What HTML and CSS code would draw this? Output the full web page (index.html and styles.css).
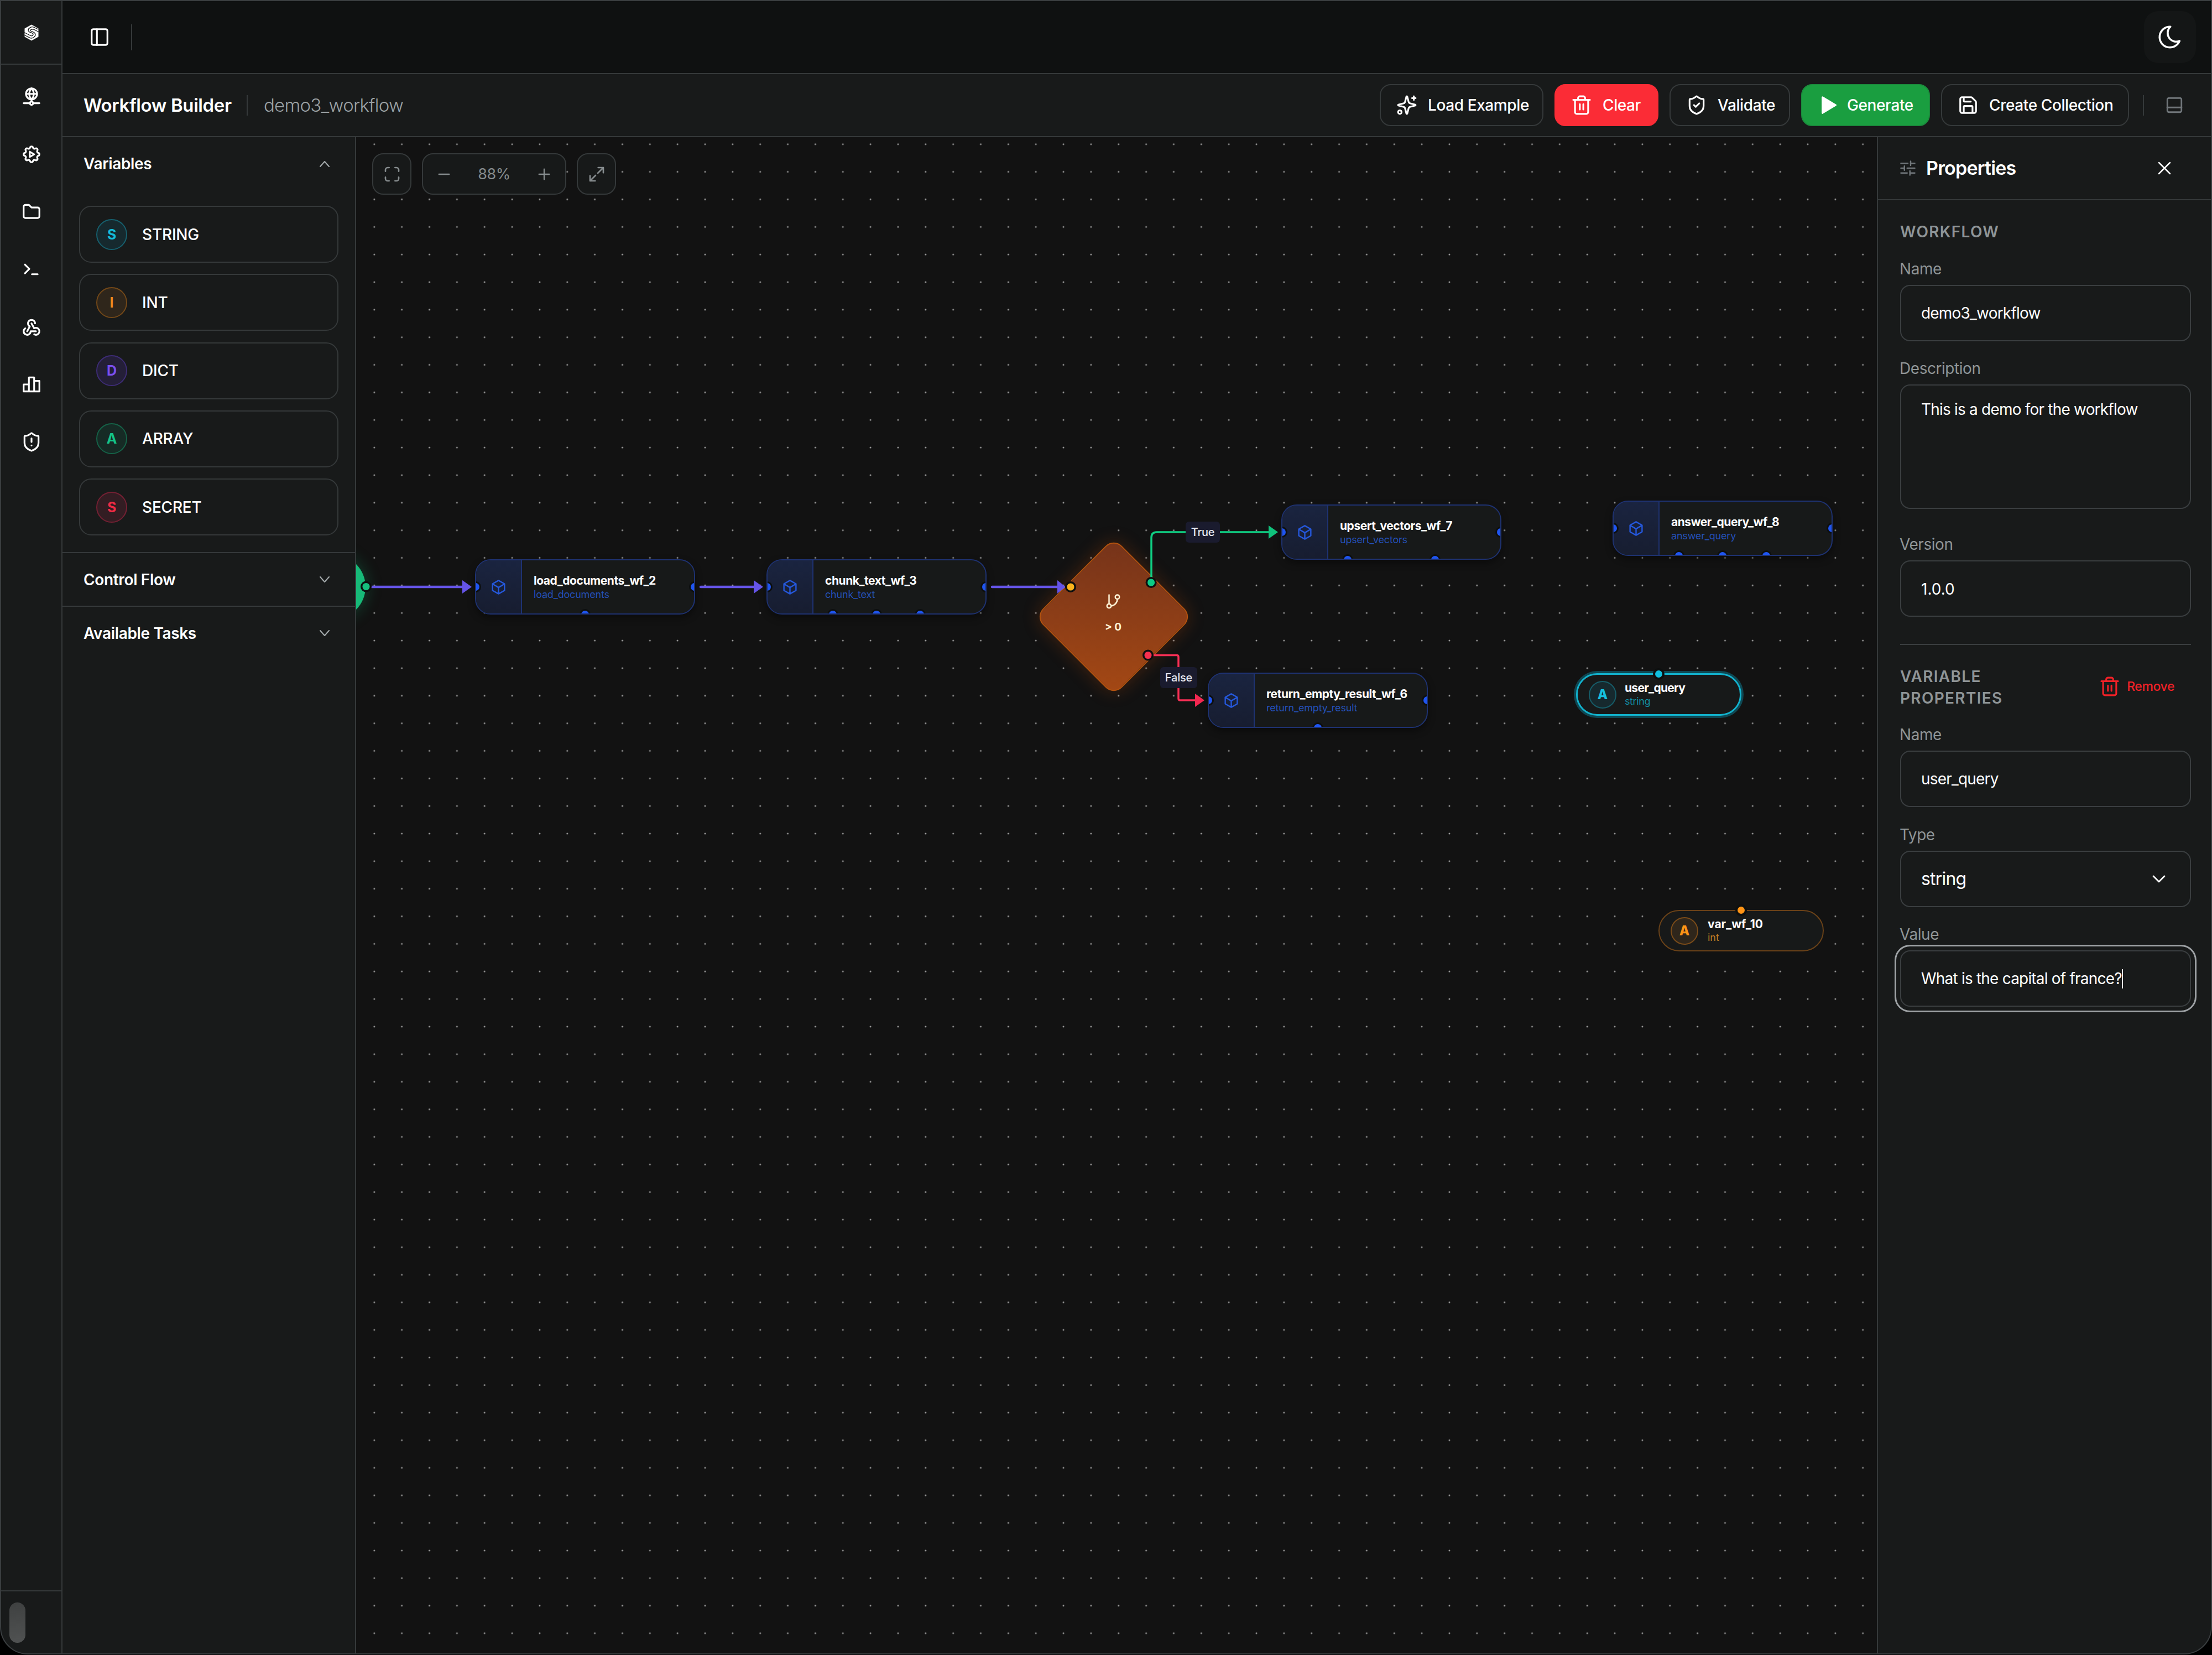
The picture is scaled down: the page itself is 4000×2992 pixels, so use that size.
FILE: index.html
```
<!DOCTYPE html>
<html lang="en">
<head>
  <meta charset="UTF-8">
  <meta name="viewport" content="width=device-width, initial-scale=1.0">
  <title>Workflow Builder</title>
  <link rel="stylesheet" href="styles.css">
</head>
<body>
  <div class="app">
    <!-- Icon rail -->
    <nav class="rail">
      <div class="rail-logo">
        <svg class="logo" viewBox="0 0 26 30">
          <path d="M13 0.5L25.5 7.5V22.5L13 29.5L0.5 22.5V7.5Z" fill="#fff"/>
          <path d="M25 9L17 5.2C13 3.4 7 7 7 10.5C7 16 16 14 16 18C16 20 13.5 21.5 11.5 20.5L0.5 15M25.5 13.5L17 9.2C14.5 8 11 9.5 11 11C11 13.5 20 13 20 18.5C20 22.5 14.5 26.5 10 24.3L0.5 19.5" fill="none" stroke="#181a1a" stroke-width="1.3"/>
        </svg>
      </div>
      <div class="rail-items">
        <svg class="icon" viewBox="0 0 24 24"><circle cx="12" cy="8.7" r="6.3"/><path d="M5.7 8.7h12.6M12 2.4c-3.4 3.6-3.4 9 0 12.6M12 2.4c3.4 3.6 3.4 9 0 12.6M12 15v2.5M3 19.3h7M14 19.3h7"/><circle cx="12" cy="19.3" r="1.9"/></svg>
        <svg class="icon" viewBox="0 0 24 24"><path d="M10.325 4.317c.426 -1.756 2.924 -1.756 3.35 0a1.724 1.724 0 0 0 2.573 1.066c1.543 -.94 3.31 .826 2.37 2.37a1.724 1.724 0 0 0 1.065 2.572c1.756 .426 1.756 2.924 0 3.35a1.724 1.724 0 0 0 -1.066 2.573c.94 1.543 -.826 3.31 -2.37 2.37a1.724 1.724 0 0 0 -2.572 1.065c-.426 1.756 -2.924 1.756 -3.35 0a1.724 1.724 0 0 0 -2.573 -1.066c-1.543 .94 -3.31 -.826 -2.37 -2.37a1.724 1.724 0 0 0 -1.065 -2.572c-1.756 -.426 -1.756 -2.924 0 -3.35a1.724 1.724 0 0 0 1.066 -2.573c-.94 -1.543 .826 -3.31 2.37 -2.37c1 .608 2.296 .07 2.572 -1.065z"/><path d="M10 9v6l5 -3z"/></svg>
        <svg class="icon" viewBox="0 0 24 24"><path d="M5 4h4l3 3h7a2 2 0 0 1 2 2v8a2 2 0 0 1 -2 2h-14a2 2 0 0 1 -2 -2v-11a2 2 0 0 1 2 -2"/></svg>
        <svg class="icon" viewBox="0 0 24 24"><path d="M4.5 6.5l5 5l-5 5M12.5 17.5h6.5"/></svg>
        <svg class="icon" viewBox="0 0 24 24"><path d="M4.876 13.61a4 4 0 1 0 6.124 3.39h6M15.066 20.502a4 4 0 1 0 1.934 -7.502c-.706 0 -1.424 .179 -2 .5l-3 -5.5M16 8a4 4 0 1 0 -8 0c0 1.506 .77 2.818 2 3.5l-3 5.5"/></svg>
        <svg class="icon" viewBox="0 0 24 24"><path d="M3 12h6v8H3zM9 4h6v16H9zM15 8h6v12h-6z"/></svg>
        <svg class="icon" viewBox="0 0 24 24"><use href="#shield"/><path d="M12 8v4M12 16h.01"/></svg>
      </div>
      <div class="rail-user"><span class="avatar"></span></div>
    </nav>

    <div class="main">
      <!-- Top bar -->
      <header class="topbar">
        <svg class="icon" viewBox="0 0 24 24"><rect x="3" y="3" width="18" height="18" rx="2"/><path d="M9 3v18"/></svg>
        <span class="topbar-sep"></span>
        <button class="theme-btn">
          <svg class="moon" viewBox="0 0 24 24"><path d="M12 3c.132 0 .263 0 .393 0a7.5 7.5 0 0 0 7.92 12.446a9 9 0 1 1 -8.313 -12.454z"/></svg>
        </button>
      </header>

      <!-- Workflow toolbar -->
      <div class="toolbar">
        <h1>Workflow Builder</h1>
        <span class="sep"></span>
        <span class="wf-name">demo3_workflow</span>
        <div class="actions">
          <button class="btn load">
            <svg class="icon" viewBox="0 0 24 24"><path d="M9.937 15.5A2 2 0 0 0 8.5 14.063l-6.135-1.582a.5.5 0 0 1 0-.962L8.5 9.936A2 2 0 0 0 9.937 8.5l1.582-6.135a.5.5 0 0 1 .963 0L14.063 8.5A2 2 0 0 0 15.5 9.937l6.135 1.581a.5.5 0 0 1 0 .964L15.5 14.063a2 2 0 0 0-1.437 1.437l-1.582 6.135a.5.5 0 0 1-.963 0zM20 2v4M22 4h-4"/><circle cx="4" cy="20" r="2"/></svg>
            <span>Load Example</span>
          </button>
          <button class="btn clear">
            <svg class="icon" viewBox="0 0 24 24"><use href="#trash"/></svg>
            <span>Clear</span>
          </button>
          <button class="btn validate">
            <svg class="icon" viewBox="0 0 24 24"><use href="#shield"/><path d="M9 12l2 2 4-4"/></svg>
            <span>Validate</span>
          </button>
          <button class="btn generate">
            <svg class="icon" viewBox="0 0 24 24"><path d="M5.5 3l15 9-15 9z" fill="#fff"/></svg>
            <span>Generate</span>
          </button>
          <button class="btn create">
            <svg class="icon" viewBox="0 0 24 24"><path d="M15.2 3a2 2 0 0 1 1.4.6l3.8 3.8a2 2 0 0 1 .6 1.4V19a2 2 0 0 1-2 2H5a2 2 0 0 1-2-2V5a2 2 0 0 1 2-2zM17 21v-7a1 1 0 0 0-1-1H8a1 1 0 0 0-1 1v7M7 3v4a1 1 0 0 0 1 1h7"/></svg>
            <span>Create Collection</span>
          </button>
        </div>
        <span class="sep end"></span>
        <svg class="dock" viewBox="0 0 24 24"><rect x="3" y="3" width="18" height="18" rx="2"/><path d="M3 15h18"/></svg>
      </div>

      <div class="workspace">
        <!-- Palette -->
        <aside class="palette">
          <section class="group open">
            <div class="group-head"><span>Variables</span><svg class="chev" viewBox="0 0 20 12"><path d="M2 11l8-9 8 9"/></svg></div>
            <div class="vars">
              <div class="var"><span class="badge string">S</span><span>STRING</span></div>
              <div class="var"><span class="badge int">I</span><span>INT</span></div>
              <div class="var"><span class="badge dict">D</span><span>DICT</span></div>
              <div class="var"><span class="badge array">A</span><span>ARRAY</span></div>
              <div class="var"><span class="badge secret">S</span><span>SECRET</span></div>
            </div>
          </section>
          <section class="group">
            <div class="group-head"><span>Control Flow</span><svg class="chev" viewBox="0 0 20 12"><path d="M2 1l8 9 8-9"/></svg></div>
          </section>
          <section class="group">
            <div class="group-head"><span>Available Tasks</span><svg class="chev" viewBox="0 0 20 12"><path d="M2 1l8 9 8-9"/></svg></div>
          </section>
        </aside>

        <!-- Canvas -->
        <main class="canvas">
          <svg class="grid" viewBox="644 248 2750 2742">
            <defs>
              <pattern id="dots" x="651.9" y="235.8" width="49.85" height="49.85" patternUnits="userSpaceOnUse">
                <circle cx="24.9" cy="24.9" r="1.5" fill="#9a9a9a"/>
              </pattern>
            </defs>
            <rect x="644" y="248" width="2750" height="2742" fill="url(#dots)"/>
          </svg>

          <div class="start"></div>

          <div class="node n1">
            <div class="node-icon"><svg viewBox="0 0 24 24"><use href="#cube"/></svg></div>
            <div class="node-text"><b>load_documents_wf_2</b><span>load_documents</span></div>
            <i class="port left"></i><i class="port right"></i><i class="port p50"></i>
          </div>
          <div class="node n2">
            <div class="node-icon"><svg viewBox="0 0 24 24"><use href="#cube"/></svg></div>
            <div class="node-text"><b>chunk_text_wf_3</b><span>chunk_text</span></div>
            <i class="port left"></i><i class="port right"></i><i class="port p30"></i><i class="port p50"></i><i class="port p70"></i>
          </div>
          <div class="node n3">
            <div class="node-icon"><svg viewBox="0 0 24 24"><use href="#cube"/></svg></div>
            <div class="node-text"><b>upsert_vectors_wf_7</b><span>upsert_vectors</span></div>
            <i class="port left"></i><i class="port right"></i><i class="port p30"></i><i class="port p70"></i>
          </div>
          <div class="node n4">
            <div class="node-icon"><svg viewBox="0 0 24 24"><use href="#cube"/></svg></div>
            <div class="node-text"><b>return_empty_result_wf_6</b><span>return_empty_result</span></div>
            <i class="port left"></i><i class="port right"></i><i class="port p50"></i>
          </div>
          <div class="node n5">
            <div class="node-icon"><svg viewBox="0 0 24 24"><use href="#cube"/></svg></div>
            <div class="node-text"><b>answer_query_wf_8</b><span>answer_query</span></div>
            <i class="port left"></i><i class="port right"></i><i class="port p30"></i><i class="port p50"></i><i class="port p70"></i>
          </div>

          <div class="diamond"></div>
          <div class="diamond-body">
            <svg viewBox="0 0 24 24"><path d="M6 2v13"/><circle cx="18" cy="5" r="3"/><circle cx="6" cy="18" r="3"/><path d="M18 8a10 10 0 0 1-9 10"/></svg>
            <span>&gt; 0</span>
          </div>

          <svg class="edges" viewBox="644 248 2750 2742">
            <g stroke="#6554e8" stroke-width="4.5" fill="none">
              <path d="M672 1061H838"/>
              <path d="M1267 1061H1365"/>
              <path d="M1794 1061H1914"/>
            </g>
            <g fill="#6554e8">
              <path d="M836 1049L853 1061L836 1073Z"/>
              <path d="M1363 1049L1380 1061L1363 1073Z"/>
              <path d="M1912 1049L1927 1061L1912 1073Z"/>
            </g>
            <path d="M2082 1047V972Q2082 962 2092 962H2296" stroke="#0fce83" stroke-width="3.5" fill="none"/>
            <path d="M2294 950L2311 962L2294 974Z" fill="#10c27c"/>
            <path d="M2084 1184.5H2128Q2131 1184.5 2131 1187.5V1263Q2131 1266 2134 1266H2163" stroke="#f92f55" stroke-width="3.5" fill="none"/>
            <path d="M2161 1254L2178 1266L2161 1278Z" fill="#f32750"/>
            <g stroke="#0d0f0f" stroke-width="3.5">
              <circle cx="662" cy="1060.5" r="8.3" fill="#16bd7d"/>
              <circle cx="1936" cy="1061" r="8.3" fill="#fbb31c"/>
              <circle cx="2081.6" cy="1053" r="8.3" fill="#0ccb84"/>
              <circle cx="2076" cy="1184.5" r="8.3" fill="#f7304f"/>
            </g>
          </svg>
          <span class="edge-label true">True</span>
          <span class="edge-label false">False</span>

          <div class="pill query">
            <span class="pill-icon">A</span>
            <div class="pill-text"><b>user_query</b><span>string</span></div>
            <i class="pill-port"></i>
          </div>
          <div class="pill number">
            <span class="pill-icon">A</span>
            <div class="pill-text"><b>var_wf_10</b><span>int</span></div>
            <i class="pill-port"></i>
          </div>

          <div class="zoom-bar">
            <button class="zbtn"><svg viewBox="0 0 24 24"><path d="M8 3H6a3 3 0 0 0-3 3v2M16 3h2a3 3 0 0 1 3 3v2M8 21H6a3 3 0 0 1-3-3v-2M16 21h2a3 3 0 0 0 3-3v-2"/></svg></button>
            <div class="zgroup">
              <svg viewBox="0 0 24 24"><path d="M4 12h16"/></svg>
              <span>88%</span>
              <svg viewBox="0 0 24 24"><path d="M4 12h16M12 4v16"/></svg>
            </div>
            <button class="zbtn"><svg viewBox="0 0 24 24"><path d="M14 3h7v7M21 3l-7.5 7.5M10 21H3v-7M3 21l7.5-7.5"/></svg></button>
          </div>
        </main>

        <!-- Properties -->
        <aside class="props">
          <div class="props-head">
            <svg class="sliders" viewBox="0 0 24 24"><path d="M2 5h10M16 5h6M16 2v6M2 12h5M11 12h11M7 9v6M2 19h9M15 19h7M15 16v6"/></svg>
            <h2>Properties</h2>
            <svg class="close" viewBox="0 0 24 24"><path d="M2 2l20 20M22 2L2 22"/></svg>
          </div>
          <div class="props-body">
            <h3>WORKFLOW</h3>
            <label>Name</label>
            <div class="field"><span>demo3_workflow</span></div>
            <label>Description</label>
            <div class="field area"><span>This is a demo for the workflow</span></div>
            <label>Version</label>
            <div class="field version"><span>1.0.0</span></div>
            <hr>
            <div class="var-head">
              <h3>VARIABLE<br>PROPERTIES</h3>
              <button class="remove">
                <svg class="icon" viewBox="0 0 24 24"><use href="#trash"/></svg>
                <span>Remove</span>
              </button>
            </div>
            <label>Name</label>
            <div class="field"><span>user_query</span></div>
            <label>Type</label>
            <div class="field select"><span>string</span><svg viewBox="0 0 24 14"><path d="M2 2l10 10L22 2"/></svg></div>
            <label>Value</label>
            <div class="field focus"><span>What is the capital of france?</span><i class="caret"></i></div>
          </div>
        </aside>
      </div>
    </div>
  </div>

  <!-- Shared icon shapes -->
  <svg class="sprite">
    <defs>
      <path id="shield" d="M20 13c0 5-3.5 7.5-7.66 8.95a1 1 0 0 1-.67-.01C7.5 20.5 4 18 4 13V6a1 1 0 0 1 1-1c2 0 4.5-1.2 6.24-2.72a1.17 1.17 0 0 1 1.52 0C14.51 3.81 17 5 19 5a1 1 0 0 1 1 1z"/>
      <path id="trash" d="M2.5 6h19M19.5 6v14a2 2 0 0 1-2 2h-11a2 2 0 0 1-2-2V6M8 6V4a2 2 0 0 1 2-2h4a2 2 0 0 1 2 2v2M10 11v6M14 11v6"/>
      <path id="cube" d="M12 2l9 5v10l-9 5-9-5V7zM12 12.5l8.5-5M12 12.5L3.5 7.5M12 12.5V22"/>
    </defs>
  </svg>
</body>
</html>
```
FILE: styles.css
```
* {
  box-sizing: border-box;
}
body {
  margin: 0;
  background: #000;
  color: #fff;
  font-family: Inter, "Liberation Sans", sans-serif;
  font-size: 28px;
}
h1, h2, h3 {
  margin: 0;
}
button {
  font: inherit;
  color: inherit;
  background: none;
  border: none;
  padding: 0;
}
svg {
  display: block;
  flex-shrink: 0;
  fill: none;
  stroke: currentColor;
  stroke-width: 2;
  stroke-linecap: round;
  stroke-linejoin: round;
}
.sprite {
  position: absolute;
  width: 0;
  height: 0;
}
.app {
  display: flex;
  width: 4000px;
  height: 2991px;
  border: 2px solid #3a3e40;
  border-radius: 0 0 50px 50px;
  background: #181a1a;
  overflow: hidden;
}
.icon {
  width: 38px;
  height: 38px;
}

/* Rail */
.rail {
  display: flex;
  flex-direction: column;
  width: 111px;
  border-right: 2px solid #35393a;
}
.rail-logo {
  display: flex;
  justify-content: center;
  align-items: center;
  height: 115px;
  border-bottom: 2px solid #35393a;
}
.logo {
  width: 28px;
  height: 30px;
  stroke: none;
}
.rail-items {
  display: flex;
  flex-direction: column;
  align-items: center;
  gap: 66px;
  flex: 1;
  padding-top: 39px;
}
.rail-user {
  height: 114px;
  border-top: 2px solid #35393a;
  padding: 20px 15px;
}
.avatar {
  display: block;
  width: 29px;
  height: 73px;
  border-radius: 15px;
  background: linear-gradient(#3f4141, #505252);
}

.main {
  display: flex;
  flex-direction: column;
  flex: 1;
}

/* Top bar */
.topbar {
  display: flex;
  align-items: center;
  height: 132px;
  padding: 0 27px 0 48px;
  background: #0f1111;
  border-bottom: 2px solid #35393a;
}
.topbar-sep {
  width: 2px;
  height: 47px;
  margin-left: 38px;
  background: #35393a;
}
.theme-btn {
  display: flex;
  align-items: center;
  justify-content: center;
  width: 94px;
  height: 94px;
  margin-left: auto;
  border-radius: 26px;
  background: #141616;
}
.moon {
  width: 50px;
  height: 50px;
  stroke-width: 1.7;
}

/* Toolbar */
.toolbar {
  display: flex;
  align-items: center;
  height: 114px;
  padding: 0 49px 0 38px;
  border-bottom: 2px solid #35393a;
}
.toolbar h1 {
  width: 295px;
  font-size: 33px;
  font-weight: 600;
  letter-spacing: -0.4px;
  white-space: nowrap;
}
.sep {
  width: 2px;
  height: 37px;
  background: #35393a;
}
.sep.end {
  margin: 0 38px 0 25px;
}
.wf-name {
  margin-left: 29px;
  font-size: 33px;
  font-weight: 300;
  letter-spacing: -0.75px;
  color: #9ba1a4;
}
.actions {
  display: flex;
  align-items: center;
  gap: 20px;
  margin-left: auto;
}
.btn {
  display: flex;
  align-items: center;
  gap: 19px;
  height: 76px;
  padding-left: 28px;
  border: 2px solid #35393a;
  border-radius: 20px;
  font-size: 28px;
  font-weight: 500;
  letter-spacing: -0.4px;
  white-space: nowrap;
}
.load {
  width: 296px;
}
.clear {
  width: 188px;
  background: #fb2c36;
  border-color: #fb2c36;
}
.validate {
  width: 218px;
}
.generate {
  width: 233px;
  gap: 15px;
  background: #1a9e40;
  border-color: #1b8a3c;
}
.create {
  width: 340px;
}
.dock {
  width: 34px;
  height: 34px;
  color: #70767a;
}

.workspace {
  display: flex;
  flex: 1;
}

/* Palette */
.palette {
  width: 531px;
  border-right: 2px solid #35393a;
}
.group {
  border-bottom: 2px solid #35393a;
}
.group:last-child {
  border: none;
}
.group-head {
  display: flex;
  align-items: center;
  justify-content: space-between;
  height: 95px;
  padding: 0 45px 0 38px;
  font-size: 28px;
  font-weight: 600;
  letter-spacing: -0.35px;
}
.group:not(.open) .group-head {
  padding-top: 1px;
}
.chev {
  width: 20px;
  height: 12px;
  color: #a5abad;
}
.vars {
  display: flex;
  flex-direction: column;
  gap: 20.3px;
  padding: 29px 30px 30px;
}
.var {
  display: flex;
  align-items: center;
  gap: 27px;
  height: 103px;
  padding-left: 29px;
  border: 2px solid #35393a;
  border-radius: 22px;
  font-weight: 500;
  letter-spacing: -0.2px;
}
.badge {
  display: flex;
  align-items: center;
  justify-content: center;
  width: 56px;
  height: 56px;
  border-radius: 50%;
  border: 2px solid;
  font-size: 25px;
  font-weight: 700;
}
.badge.string { color: #14bbd9; background: #16292e; border-color: #165f6d; }
.badge.int { color: #f08a1d; background: #2f261b; border-color: #734818; }
.badge.dict { color: #7b4ff0; background: #241f38; border-color: #3d2c75; }
.badge.array { color: #14c488; background: #162b25; border-color: #156247; }
.badge.secret { color: #f02b45; background: #331d23; border-color: #742033; }

/* Canvas */
.canvas {
  position: relative;
  flex: 1;
  background: #121212;
  overflow: hidden;
}
.grid, .edges {
  position: absolute;
  inset: 0;
  width: 2750px;
  height: 2742px;
  stroke: none;
}
.start {
  position: absolute;
  left: -99px;
  top: 755px;
  width: 116px;
  height: 116px;
  border-radius: 50%;
  background: #17b978;
  box-shadow: 0 0 30px rgba(20, 185, 120, 0.3);
}
.node {
  position: absolute;
  display: flex;
  width: 398px;
  height: 100px;
  border: 2px solid #1e3272;
  border-radius: 28px;
  background: #171919;
  box-shadow: 0 6px 14px rgba(0, 0, 0, 0.4);
  overflow: hidden;
}
.n1 { left: 215px; top: 763px; }
.n2 { left: 742px; top: 763px; }
.n3 { left: 1673px; top: 664px; }
.n4 { left: 1540px; top: 968px; }
.n5 { left: 2272px; top: 657px; }
.node-icon {
  display: flex;
  align-items: center;
  justify-content: center;
  width: 83px;
  border-right: 2px solid #1e3272;
  background: linear-gradient(#1a2440, #171d30);
  color: #2558dc;
}
.node-icon svg {
  width: 29px;
  height: 29px;
}
.node-text {
  display: flex;
  flex-direction: column;
  padding: 23px 0 0 21px;
  white-space: nowrap;
}
.node-text b {
  font-size: 21px;
  font-weight: 700;
  line-height: 27px;
  letter-spacing: -0.45px;
}
.node-text span {
  font-size: 18px;
  line-height: 23px;
  letter-spacing: -0.2px;
  color: #2450b8;
}
.port {
  position: absolute;
  width: 20px;
  height: 20px;
  border: 3px solid #0d0f0f;
  border-radius: 50%;
  background: #1f55f0;
}
.port.left { left: -11px; top: 38px; }
.port.right { right: -11px; top: 38px; }
.p30, .p50, .p70 {
  bottom: -12px;
  margin-left: -10px;
}
.p30 { left: 30%; }
.p50 { left: 50%; }
.p70 { left: 70%; }

.diamond {
  position: absolute;
  left: 1268.5px;
  top: 766px;
  width: 202px;
  height: 202px;
  border: 2px solid #b4530f;
  border-radius: 21px;
  background: linear-gradient(135deg, #75331a, #a44814);
  box-shadow: 0 0 32px rgba(200, 80, 10, 0.28);
  transform: rotate(45deg);
}
.diamond-body {
  position: absolute;
  left: 1319px;
  top: 825px;
  width: 100px;
  display: flex;
  flex-direction: column;
  align-items: center;
  gap: 19px;
  color: #fff3d6;
  font-size: 19px;
  font-weight: 700;
}
.diamond-body svg {
  width: 30px;
  height: 30px;
}
.edge-label {
  position: absolute;
  display: flex;
  align-items: center;
  justify-content: center;
  height: 38px;
  border-radius: 6px;
  background: #1a1b2e;
  color: #e4e6f0;
  font-size: 20px;
  font-weight: 500;
  letter-spacing: -0.2px;
}
.edge-label.true { left: 1500px; top: 695px; width: 62px; }
.edge-label.false { left: 1454px; top: 958px; width: 67px; }

.pill {
  position: absolute;
  display: flex;
  align-items: center;
  width: 299px;
  height: 75px;
  border: 2px solid #6b4218;
  border-radius: 38px;
  background: #171919;
}
.pill.query {
  left: 2206px;
  top: 969px;
  height: 77px;
  border: 3px solid #12b2cd;
  box-shadow: 0 0 0 4px #0f4752;
}
.pill.number {
  left: 2355px;
  top: 1397px;
}
.pill-icon {
  display: flex;
  align-items: center;
  justify-content: center;
  width: 50px;
  height: 50px;
  margin-left: 20px;
  border-radius: 50%;
  border: 2px solid #7a4b19;
  background: #2f261b;
  color: #ff9416;
  font-size: 24px;
  font-weight: 800;
}
.query .pill-icon {
  border-color: #165c68;
  background: #16292e;
  color: #16c0de;
}
.pill-text {
  display: flex;
  flex-direction: column;
  margin-left: 17px;
}
.query .pill-text {
  margin-left: 15px;
}
.pill-text b {
  font-size: 21px;
  font-weight: 700;
  line-height: 24px;
}
.query .pill-text b {
  letter-spacing: -0.7px;
}
.pill-text span {
  font-size: 18px;
  line-height: 23px;
  color: #c07a23;
}
.query .pill-text span {
  letter-spacing: -0.4px;
  color: #138fa4;
}
.pill-port {
  position: absolute;
  left: 137px;
  top: -12px;
  width: 21px;
  height: 21px;
  border: 4px solid #0d0f0f;
  border-radius: 50%;
  background: #ff9416;
}
.query .pill-port {
  left: 136px;
  background: #10c0e0;
}

.zoom-bar {
  position: absolute;
  left: 29px;
  top: 29px;
  display: flex;
  gap: 19px;
  color: #868c8e;
}
.zoom-bar svg {
  width: 32px;
  height: 32px;
}
.zbtn, .zgroup {
  display: flex;
  align-items: center;
  justify-content: center;
  width: 71px;
  height: 75px;
  border: 2px solid #35393a;
  border-radius: 20px;
  background: #171919;
}
.zgroup {
  justify-content: space-between;
  width: 261px;
  padding: 0 24px;
  font-size: 27px;
  letter-spacing: -0.5px;
}
.zoom-bar .zgroup svg {
  width: 28px;
  height: 28px;
}

/* Properties */
.props {
  width: 604px;
  border-left: 2px solid #35393a;
}
.props-head {
  display: flex;
  align-items: center;
  height: 114px;
  padding: 0 72px 0 39px;
  border-bottom: 2px solid #35393a;
}
.props-head h2 {
  margin: -1px 0 0 18px;
  font-size: 34px;
  font-weight: 600;
  letter-spacing: -0.8px;
}
.sliders {
  width: 30px;
  height: 30px;
  color: #70767a;
}
.close {
  width: 24px;
  height: 24px;
  margin-left: auto;
  stroke-width: 2.5;
}
.props-body {
  display: flex;
  flex-direction: column;
  padding: 38px 36px 0 40px;
}
.props-body h3 {
  font-size: 28px;
  font-weight: 600;
  line-height: 38.5px;
  letter-spacing: 1.3px;
  color: #8f9597;
}
.props-body label {
  height: 38px;
  margin-top: 30.5px;
  margin-left: -1px;
  line-height: 38px;
  font-size: 28px;
  letter-spacing: -0.45px;
  color: #8f9597;
}
.props-body h3 + label,
.props-body .var-head + label {
  margin-top: 28px;
}
.field {
  display: flex;
  align-items: center;
  height: 102px;
  margin-top: 10px;
  padding-left: 36px;
  border: 2px solid #3a3e40;
  border-radius: 18px;
  font-size: 28px;
  letter-spacing: -0.8px;
  white-space: nowrap;
}
.area {
  align-items: flex-start;
  height: 225px;
  padding-top: 26px;
  margin-bottom: 14.5px;
}
.version {
  padding-top: 2px;
  letter-spacing: 0;
}
.props-body hr {
  width: 100%;
  height: 2px;
  margin: 49px 0 38px;
  border: none;
  background: #3a3e40;
}
.var-head {
  display: flex;
  align-items: center;
  justify-content: space-between;
}
.remove {
  display: flex;
  align-items: center;
  gap: 12px;
  margin: -3px 30px 0 0;
  color: #f02127;
  font-size: 23px;
  font-weight: 500;
  letter-spacing: -0.4px;
}
.select {
  justify-content: space-between;
  padding-right: 44px;
  font-size: 32px;
}
.select svg {
  width: 24px;
  height: 14px;
  stroke-width: 2.8;
}
.focus {
  outline: 3px solid #9da1a4;
  outline-offset: 7px;
}
.caret {
  width: 2px;
  height: 35px;
  background: #fff;
}
```
